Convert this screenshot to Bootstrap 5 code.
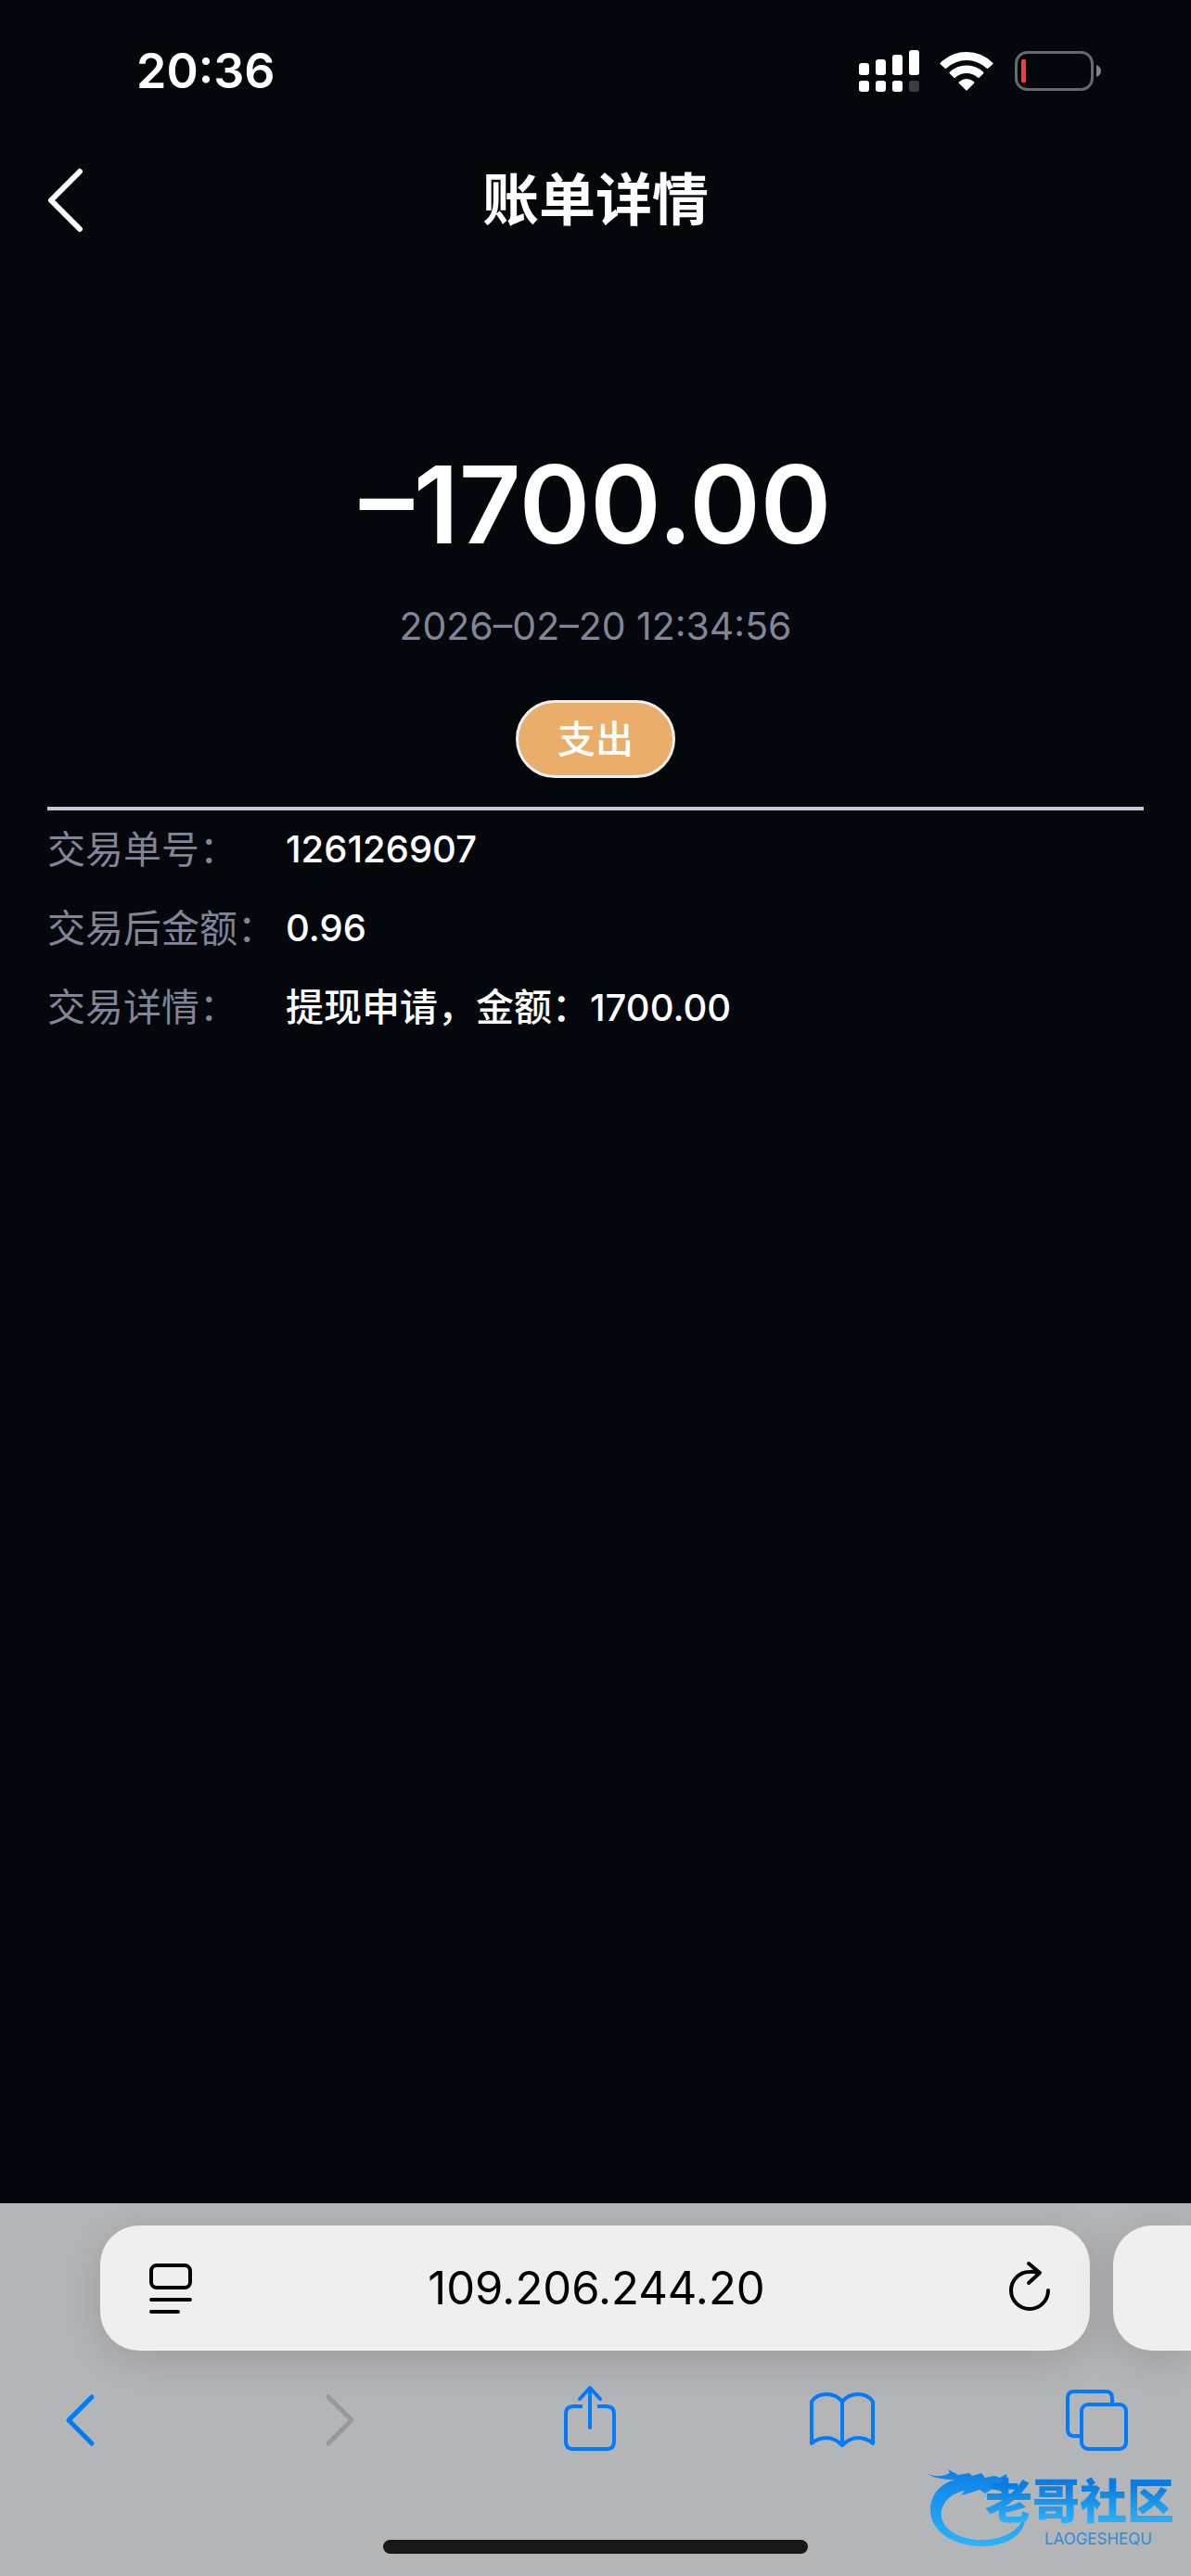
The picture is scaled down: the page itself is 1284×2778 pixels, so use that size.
<!DOCTYPE html>
<html lang="zh-CN">
<head>
<meta charset="utf-8">
<meta name="viewport" content="width=device-width, initial-scale=1">
<title>账单详情</title>
<link rel="stylesheet" href="https://cdn.jsdelivr.net/npm/bootstrap@5.3.0/dist/css/bootstrap.min.css">
<style>
body{font-family:Inter,"Noto Sans CJK SC",sans-serif;background:#04070c;color:#fff;font-size:41px;line-height:60px}
svg{display:block;flex:none}
.status{height:144px;padding:9px 96px 0 147px}
.clock{font-size:52px;font-weight:600;line-height:64px}
.icons-row{gap:21px}
.title-bar{height:144px;padding:0 51px}
.title-bar h1{font-size:61px;font-weight:700;line-height:72px}
.side{width:60px}
.amount{font-size:116px;font-weight:600;line-height:140px;margin-top:186px}
.muted-text{color:#818597}
.stamp{margin-top:31px}
.kind{width:172px;height:84px;border:3px solid #eee;border-radius:42px;background:#e9ae6a;font-weight:500;margin-top:50px}
.details{margin:31px 51px 0;border-top:4px solid #c5cad8;padding-top:12px}
.details dt{width:257px;font-weight:400}
.details dd{font-weight:500}
.num{font-size:40px}
.details .item{margin-bottom:25px}
.browser{height:402px;background:#b4b5b7;padding-top:24px;color:#000}
.tabs-row{padding-left:108px;gap:25px}
.address{height:135px;border-radius:42px;background:#efeff0;box-shadow:0 10px 50px rgba(0,0,0,.14);padding:0 42px 0 53px}
.next-tab{width:84px;height:135px;border-radius:42px 0 0 42px;background:#efeff0;box-shadow:0 10px 50px rgba(0,0,0,.14)}
.url{font-size:49px;line-height:60px;background:none;outline:0;min-width:0;color:#000}
.tools{padding:35px 68px 0 53px}
.home-bar{width:458px;height:15px;border-radius:8px;background:#181818;bottom:24px}
.brand{right:18px;bottom:22px;width:266px;height:96px}
.brand-words{right:0;top:8px}
.brand-name{font-size:51px;font-weight:900;line-height:60px;background:linear-gradient(#0a7be0 20%,#2cb0f8 85%);-webkit-background-clip:text;background-clip:text;color:transparent}
.brand-latin{font-size:17px;line-height:20px;color:#2f8cd8;padding-right:24px}
</style>
<script src="https://cdn.jsdelivr.net/npm/bootstrap@5.3.0/dist/js/bootstrap.bundle.min.js"></script>
</head>
<body class="d-flex flex-column min-vh-100 overflow-x-hidden">
<header>
  <div class="status d-flex align-items-center justify-content-between">
    <time class="clock">20:36</time>
    <div class="icons-row d-flex align-items-center">
      <svg width="66" height="46" viewBox="0 0 66 46" fill="#fff"><rect y="14" width="11" height="13" rx="3"/><rect x="18" y="10" width="11" height="17" rx="3"/><rect x="36" y="5" width="11" height="22" rx="3"/><rect x="54" width="11" height="27" rx="3"/><rect y="33" width="11" height="12" rx="3"/><rect x="18" y="33" width="11" height="12" rx="3"/><rect x="36" y="33" width="11" height="12" rx="3"/><rect x="54" y="33" width="11" height="12" rx="3" opacity=".22"/></svg>
      <svg width="58" height="44" viewBox="0 0 58 44" fill="#fff" stroke="#fff" stroke-linejoin="round"><path stroke-width="2" d="M1.500 13.500Q13 2 29 2t27.500 11.500L51.500 18Q41.500 9 29 9T6.500 18z"/><path stroke-width="2" d="M11.500 23.500Q19 16.500 29 16.500t17.500 7L42 28q-5.500-5-13-5t-13 5z"/><path stroke-width="2" d="M21.500 34Q29 28 36.500 34L29 41.500z"/></svg>
      <svg width="96" height="46" viewBox="0 0 96 46"><rect x="3.500" y="2.500" width="82" height="40" rx="12" fill="none" stroke="#66696e" stroke-width="3"/><rect x="9" y="10" width="5" height="25" rx="1.500" fill="#ff3b30"/><path d="M90 16q5 2 5 6.500T90 29z" fill="#808287"/></svg>
    </div>
  </div>
  <div class="title-bar d-flex align-items-center justify-content-between">
    <a href="#" class="side" aria-label="返回"><svg width="40" height="70" viewBox="0 0 40 70" fill="none" stroke="#fff" stroke-width="6" stroke-linecap="round" stroke-linejoin="round"><path d="M35 4 4 35 35 66"/></svg></a>
    <h1 class="m-0">账单详情</h1>
    <span class="side"></span>
  </div>
</header>
<main class="flex-grow-1">
  <section class="d-flex flex-column align-items-center">
    <div class="amount">–1700.00</div>
    <time class="stamp muted-text">2026–02–20 12:34:56</time>
    <span class="kind d-flex align-items-center justify-content-center">支出</span>
  </section>
  <dl class="details">
    <div class="item d-flex"><dt class="muted-text">交易单号：</dt><dd class="m-0 num">126126907</dd></div>
    <div class="item d-flex"><dt class="muted-text">交易后金额：</dt><dd class="m-0 num">0.96</dd></div>
    <div class="item d-flex"><dt class="muted-text">交易详情：</dt><dd class="m-0">提现申请，金额：<span class="num">1700.00</span></dd></div>
  </dl>
</main>
<footer class="browser position-relative">
  <div class="tabs-row d-flex">
    <div class="address d-flex align-items-center flex-grow-1">
      <button class="btn p-0 border-0" aria-label="页面设置"><svg width="46" height="56" viewBox="0 0 46 56" fill="none" stroke="#000" stroke-width="4" stroke-linecap="round"><rect x="2" y="3" width="42" height="24" rx="6"/><path d="M2 40h42M2 53h29"/></svg></button>
      <input class="url flex-grow-1 border-0 text-center py-0 ps-0 pe-2" type="text" value="109.206.244.20" aria-label="网址">
      <button class="btn p-0 border-0" aria-label="刷新"><svg width="46" height="60" viewBox="0 0 46 60" fill="none" stroke="#000" stroke-width="4" stroke-linecap="round" stroke-linejoin="round"><path d="M43 32A20 20 0 1 1 23 12Q29 11.500 34 13M22 3 34 13 22 24"/></svg></button>
    </div>
    <div class="next-tab"></div>
  </div>
  <nav class="tools d-flex justify-content-between align-items-center" aria-label="浏览器">
    <button class="btn p-0 border-0" aria-label="后退"><svg width="68" height="80" viewBox="0 0 68 80" fill="none" stroke="#007aff" stroke-width="5" stroke-linecap="round" stroke-linejoin="round"><path d="M46 15 21 40 46 65"/></svg></button>
    <button class="btn p-0 border-0" aria-label="前进"><svg width="68" height="80" viewBox="0 0 68 80" fill="none" stroke="#98999b" stroke-width="5" stroke-linecap="round" stroke-linejoin="round"><path d="M28 15 53 40 28 65"/></svg></button>
    <button class="btn p-0 border-0" aria-label="分享"><svg width="68" height="80" viewBox="0 0 68 80" fill="none" stroke="#007aff" stroke-width="4" stroke-linecap="round" stroke-linejoin="round"><path stroke-linecap="butt" d="M29 25H19q-8 0-8 8v30q0 8 8 8h36q8 0 8-8V33q0-8-8-8H45"/><path d="M37 48V5M26 17 37 5 48 17"/></svg></button>
    <button class="btn p-0 border-0" aria-label="书签"><svg width="72" height="80" viewBox="0 0 72 80" fill="none" stroke="#007aff" stroke-width="4" stroke-linejoin="round"><path d="M37 20Q31 12 20 12T4 20V65Q11 59 20 59t17 8q8-8 17-8t16 6V20Q65 12 54 12T37 20V66"/></svg></button>
    <button class="btn p-0 border-0" aria-label="标签页"><svg width="68" height="80" viewBox="0 0 68 80" fill="none" stroke="#007aff" stroke-width="4"><path d="M17 57H10q-7 0-7-7V16q0-7 7-7H44q7 0 7 7v6"/><rect x="18" y="23" width="48" height="48" rx="7"/></svg></button>
  </nav>
  <div class="home-bar position-absolute start-50 translate-middle-x"></div>
  <div class="brand position-absolute">
    <svg width="130" height="96" viewBox="0 0 130 96"><defs><linearGradient id="sea" x2="0" y2="1"><stop stop-color="#0b7fe6"/><stop offset="1" stop-color="#2cb4fb"/></linearGradient></defs><path fill="url(#sea)" d="M0 8Q14 13 24 7L22 3 33 9 45 7 48 10 58 7 62 12 72 10 78 12 85 8 86 14 82 18 73 19 84 21 81 25 83 28 70 24 62 29 56 25 47 28 36 31 40 26Q20 30 15 47C12 67 34 79 58 79 82 79 96 70 105 55 106 72 86 86 60 86 27 86 2 69 3 45 4 29 14 19 29 14Q10 14 0 8z"/></svg>
    <div class="brand-words position-absolute text-end"><div class="brand-name">老哥社区</div><div class="brand-latin">LAOGESHEQU</div></div>
  </div>
</footer>
</body>
</html>
